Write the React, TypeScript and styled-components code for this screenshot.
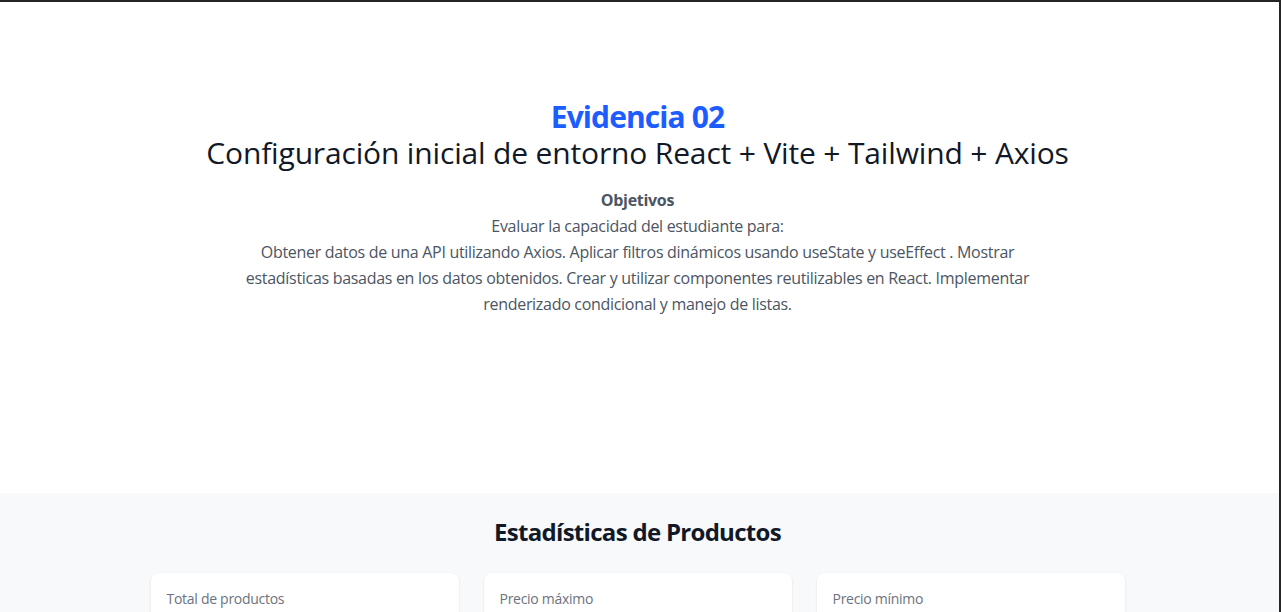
import React from "react";
import styled, { createGlobalStyle } from "styled-components";

const GlobalStyle = createGlobalStyle`
  html, body {
    margin: 0;
    padding: 0;
    background: #ffffff;
    font-family: "Open Sans", "Noto Sans", sans-serif;
    overflow: hidden;
  }
  * { box-sizing: border-box; }
`;

const Frame = styled.div`
  border-top: 2px solid #252525;
  border-right: 2px solid #252525;
  height: 612px;
  overflow: hidden;
  display: flex;
  flex-direction: column;
`;

const Hero = styled.section`
  height: 491px;
  flex-shrink: 0;
  padding: 97px 4px 0 0;
  display: flex;
  flex-direction: column;
  align-items: center;
  text-align: center;
`;

const Eyebrow = styled.h1`
  margin: 0;
  font-size: 30px;
  line-height: 36px;
  font-weight: 700;
  letter-spacing: -0.9px;
  color: #1d5cff;
`;

const Title = styled.h2`
  margin: 0;
  font-size: 30px;
  line-height: 36px;
  font-weight: 400;
  letter-spacing: -0.16px;
  color: #111827;
`;

const Objectives = styled.div`
  margin-top: 16px;
  max-width: 800px;
  font-size: 16px;
  line-height: 26px;
  letter-spacing: -0.3px;
  color: #4b5563;
`;

const ObjectivesTitle = styled.p`
  margin: 0;
  font-weight: 700;
`;

const ObjectivesText = styled.p`
  margin: 0;
`;

const Stats = styled.section`
  flex: 1;
  background: #f8f9fb;
  padding: 23px 4px 0 0;
  display: flex;
  flex-direction: column;
  align-items: center;
`;

const StatsTitle = styled.h2`
  margin: 0 0 25px;
  font-size: 24px;
  line-height: 32px;
  font-weight: 700;
  letter-spacing: -0.7px;
  color: #111827;
`;

const CardGrid = styled.div`
  width: 974px;
  display: grid;
  grid-template-columns: repeat(3, 1fr);
  gap: 25px;
`;

const Card = styled.div`
  background: #ffffff;
  border-radius: 8px;
  box-shadow: 0 1px 3px rgba(0, 0, 0, 0.08), 0 1px 2px rgba(0, 0, 0, 0.04);
  padding: 16px;
  height: 120px;
`;

const CardLabel = styled.p`
  margin: 0;
  font-size: 14px;
  line-height: 20px;
  letter-spacing: -0.28px;
  color: #6b7280;
`;

const stats = ["Total de productos", "Precio máximo", "Precio mínimo"];

export default function App() {
  return (
    <>
      <GlobalStyle />
      <Frame>
        <Hero>
          <Eyebrow>Evidencia 02</Eyebrow>
          <Title>Configuración inicial de entorno React + Vite + Tailwind + Axios</Title>
          <Objectives>
            <ObjectivesTitle>Objetivos</ObjectivesTitle>
            <ObjectivesText>Evaluar la capacidad del estudiante para:</ObjectivesText>
            <ObjectivesText>
              Obtener datos de una API utilizando Axios. Aplicar filtros dinámicos usando useState y
              useEffect . Mostrar estadísticas basadas en los datos obtenidos. Crear y utilizar
              componentes reutilizables en React. Implementar renderizado condicional y manejo de
              listas.
            </ObjectivesText>
          </Objectives>
        </Hero>
        <Stats>
          <StatsTitle>Estadísticas de Productos</StatsTitle>
          <CardGrid>
            {stats.map((s) => (
              <Card key={s}>
                <CardLabel>{s}</CardLabel>
              </Card>
            ))}
          </CardGrid>
        </Stats>
      </Frame>
    </>
  );
}
